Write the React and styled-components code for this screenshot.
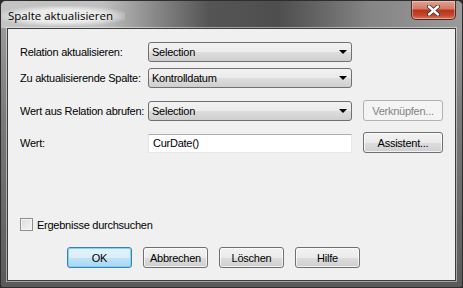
import React from "react";
import styled, { createGlobalStyle } from "styled-components";

const Global = createGlobalStyle`
  html, body { margin: 0; padding: 0; background: #2b2b2b; }
  body { font-family: "Liberation Sans", Arial, sans-serif; }
`;

const Window = styled.div`
  width: 463px;
  height: 288px;
  box-sizing: border-box;
  display: flex;
  flex-direction: column;
  border: 1px solid #2e2e2e;
  border-radius: 6px 6px 3px 3px;
  overflow: hidden;
  background: linear-gradient(180deg, #a4a4a4 0%, #7a7a7a 40%, #5a5a5a 100%);
`;

const TitleBar = styled.div`
  height: 27px;
  display: flex;
  align-items: flex-start;
  justify-content: space-between;
  background: linear-gradient(90deg, #c4c4c4 0%, #c0c0c0 22%, #8a8a8a 33%, #555 45%, #4e4e4e 60%, #626262 68%, #858585 80%, #9a9a9a 100%);
`;

const Title = styled.span`
  margin: 5px 0 0 0;
  padding: 2px 12px 2px 7px;
  font-family: "Open Sans", "Noto Sans", sans-serif;
  font-size: 11.5px;
  line-height: 16px;
  color: #000;
  background: radial-gradient(ellipse at center, rgba(238,238,238,0.95) 45%, rgba(238,238,238,0) 78%);
`;

const CloseBtn = styled.div`
  width: 45px;
  height: 19px;
  margin-right: 6px;
  border: 1px solid #4d2a24;
  border-top: none;
  border-radius: 0 0 5px 5px;
  box-sizing: border-box;
  display: flex;
  align-items: center;
  justify-content: center;
  background: linear-gradient(180deg, #e3a08f 0%, #cf7a64 45%, #b8321a 50%, #c6462c 80%, #d97a5e 100%);
  box-shadow: inset 0 0 0 1px rgba(255,255,255,0.35);
`;

const Client = styled.div`
  flex: 1;
  margin: 0 6px 6px 6px;
  background: #f0f0f0;
  border: 1px solid #3d3d3d;
  box-shadow: 0 0 0 1px rgba(255,255,255,0.45);
  display: flex;
  flex-direction: column;
  padding: 13px 0 0 12px;
  font-size: 11px;
  color: #000;
`;

const Form = styled.div`
  display: grid;
  grid-template-columns: 117px 204px 80px;
  column-gap: 11px;
  align-items: center;
`;

const Label = styled.div`
  font-size: 11px;
  letter-spacing: -0.25px;
  white-space: nowrap;
  margin-top: ${p => p.$mt || 0}px;
`;

const Combo = styled.div`
  height: 20px;
  box-sizing: border-box;
  border: 1px solid #707070;
  border-radius: 3px;
  background: linear-gradient(180deg, #f2f2f2 0%, #ebebeb 50%, #dddddd 51%, #cfcfcf 100%);
  display: flex;
  align-items: center;
  justify-content: space-between;
  padding: 0 4px 0 3px;
  letter-spacing: -0.25px;
  margin-top: ${p => p.$mt || 0}px;
`;

const Arrow = styled.span`
  width: 0;
  height: 0;
  border-left: 4px solid transparent;
  border-right: 4px solid transparent;
  border-top: 4px solid #000;
`;

const TextField = styled.div`
  height: 19px;
  box-sizing: border-box;
  border: 1px solid #abadb3;
  border-right-color: #e3e9ef;
  border-bottom-color: #e3e9ef;
  border-left-color: #e2e3ea;
  background: #fff;
  padding: 0 4px;
  display: flex;
  align-items: center;
  letter-spacing: -0.25px;
  margin-top: ${p => p.$mt || 0}px;
`;

const Button = styled.div`
  height: 21px;
  width: ${p => p.$w || 80}px;
  box-sizing: border-box;
  border: 1px solid ${p => (p.$disabled ? "#adb2b5" : p.$default ? "#3c7fb1" : "#707070")};
  border-radius: 3px;
  display: flex;
  align-items: center;
  justify-content: center;
  letter-spacing: -0.25px;
  color: ${p => (p.$disabled ? "#838383" : "#000")};
  background: ${p =>
    p.$disabled
      ? "#f4f4f4"
      : p.$default
      ? "linear-gradient(180deg, #e3f2fb 0%, #d9eefa 50%, #bfe3f8 51%, #a9d7f2 100%)"
      : "linear-gradient(180deg, #f2f2f2 0%, #ebebeb 50%, #dddddd 51%, #cfcfcf 100%)"};
  box-shadow: ${p =>
    p.$default ? "inset 0 0 0 1px #7cd5f7" : p.$disabled ? "none" : "inset 0 0 0 1px rgba(255,255,255,0.7)"};
  margin-top: ${p => p.$mt || 0}px;
`;

const CheckRow = styled.div`
  display: flex;
  align-items: center;
  gap: 4px;
  margin-top: 65px;
  letter-spacing: -0.25px;
`;

const Check = styled.span`
  width: 13px;
  height: 13px;
  box-sizing: border-box;
  border: 1px solid #8e8f8f;
  background: linear-gradient(135deg, #dcdcdc 0%, #f4f4f4 100%);
  box-shadow: inset 0 0 0 1px #f4f4f4;
`;

const ButtonRow = styled.div`
  display: flex;
  gap: 11px;
  margin-top: 16px;
  padding-left: 47px;
`;

export default function App() {
  return (
    <>
      <Global />
      <Window>
        <TitleBar>
          <Title>Spalte aktualisieren</Title>
          <CloseBtn>
            <svg width="13" height="11" viewBox="0 0 13 11">
              <path d="M2 1.5 L11 9.5 M11 1.5 L2 9.5" stroke="#3a2a2a" strokeWidth="4" strokeLinecap="round" />
              <path d="M2 1.5 L11 9.5 M11 1.5 L2 9.5" stroke="#fff" strokeWidth="2.4" strokeLinecap="round" />
            </svg>
          </CloseBtn>
        </TitleBar>
        <Client>
          <Form>
            <Label>Relation aktualisieren:</Label>
            <Combo>Selection<Arrow /></Combo>
            <span />
            <Label $mt={6}>Zu aktualisierende Spalte:</Label>
            <Combo $mt={6}>Kontrolldatum<Arrow /></Combo>
            <span />
            <Label $mt={13}>Wert aus Relation abrufen:</Label>
            <Combo $mt={13}>Selection<Arrow /></Combo>
            <Button $mt={12} $disabled>Verknüpfen...</Button>
            <Label $mt={12}>Wert:</Label>
            <TextField $mt={12}>CurDate()</TextField>
            <Button $mt={11}>Assistent...</Button>
          </Form>
          <CheckRow>
            <Check />
            <span>Ergebnisse durchsuchen</span>
          </CheckRow>
          <ButtonRow>
            <Button $w={65} $default>OK</Button>
            <Button $w={65}>Abbrechen</Button>
            <Button $w={65}>Löschen</Button>
            <Button $w={65}>Hilfe</Button>
          </ButtonRow>
        </Client>
      </Window>
    </>
  );
}
